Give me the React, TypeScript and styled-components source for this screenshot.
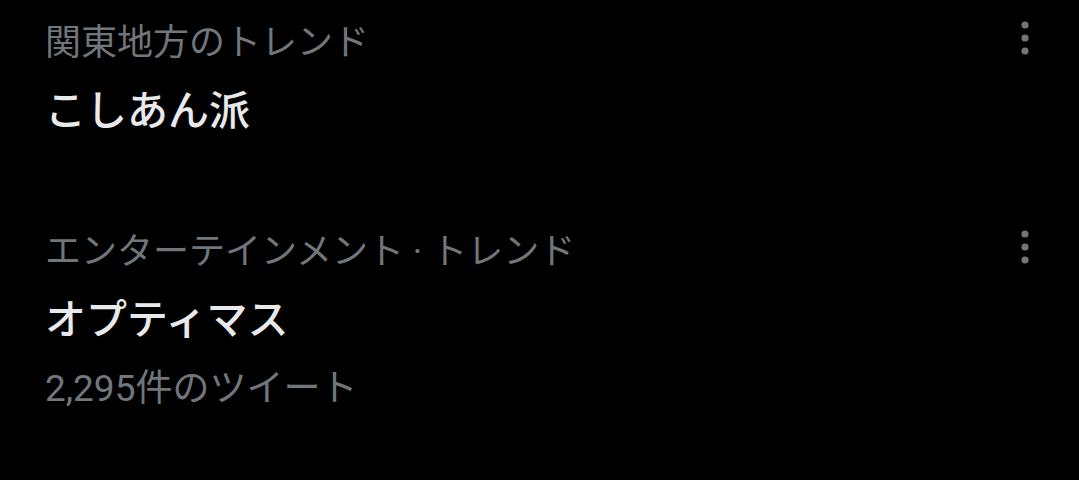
import React from "react";
import styled, { createGlobalStyle } from "styled-components";

const GlobalStyle = createGlobalStyle`
  html, body {
    margin: 0;
    padding: 0;
    background: #000;
  }
  body {
    font-family: Roboto, "Noto Sans CJK JP", sans-serif;
  }
`;

const List = styled.div`
  width: 1079px;
  height: 480px;
  background: #000;
  display: flex;
  flex-direction: column;
  overflow: hidden;
`;

const Item = styled.div<{ $bottom: number }>`
  display: flex;
  flex-direction: column;
  gap: 17px;
  padding: 19px 40px ${(p) => p.$bottom}px 45px;
`;

const Header = styled.div`
  display: flex;
  align-items: center;
  justify-content: space-between;
`;

const Category = styled.div`
  font-size: 36px;
  line-height: 48px;
  color: #71767b;
  white-space: nowrap;
`;

const Title = styled.div`
  font-size: 41px;
  line-height: 54px;
  font-weight: 500;
  color: #e7e9ea;
`;

const Count = styled.div`
  font-size: 37px;
  line-height: 48px;
  margin-top: 1px;
  color: #71767b;
`;

const MoreButton = styled.button`
  display: flex;
  align-items: flex-start;
  justify-content: center;
  width: 28px;
  height: 48px;
  padding: 0;
  border: none;
  background: none;
`;

const MoreIcon = () => (
  <svg width="28" height="40" viewBox="0 0 28 40">
    <circle cx="14" cy="6" r="3.6" fill="#71767b" />
    <circle cx="14" cy="19" r="3.6" fill="#71767b" />
    <circle cx="14" cy="32" r="3.6" fill="#71767b" />
  </svg>
);

interface ITrend {
  category: string;
  title: string;
  count?: string;
}

const trends: ITrend[] = [
  { category: "関東地方のトレンド", title: "こしあん派" },
  {
    category: "エンターテインメント · トレンド",
    title: "オプティマス",
    count: "2,295件のツイート",
  },
];

const TrendItem = ({ trend }: { trend: ITrend }) => (
  <Item $bottom={trend.count ? 16 : 71}>
    <Header>
      <Category>{trend.category}</Category>
      <MoreButton>
        <MoreIcon />
      </MoreButton>
    </Header>
    <Title>{trend.title}</Title>
    {trend.count && <Count>{trend.count}</Count>}
  </Item>
);

export default function App() {
  return (
    <>
      <GlobalStyle />
      <List>
        {trends.map((t) => (
          <TrendItem key={t.title} trend={t} />
        ))}
      </List>
    </>
  );
}
